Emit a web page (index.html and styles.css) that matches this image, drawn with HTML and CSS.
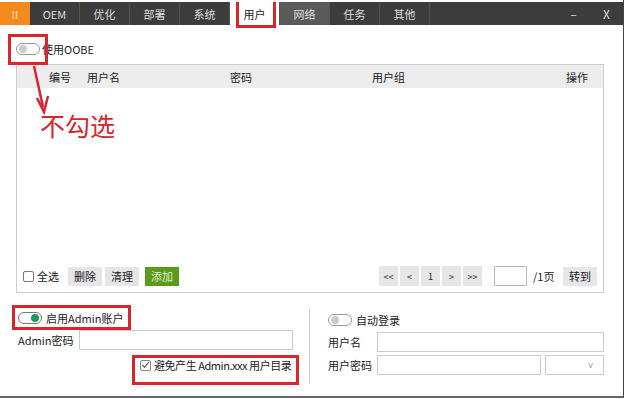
FILE: index.html
```html
<!DOCTYPE html>
<html lang="zh-CN">
<head>
  <meta charset="UTF-8" />
  <title>用户</title>
  <link rel="stylesheet" href="styles.css">
</head>
<body>
  <div class="window">
    <div class="titlebar">
      <div class="tab tab-logo">II</div>
      <div class="tab">OEM</div>
      <div class="tab">优化</div>
      <div class="tab">部署</div>
      <div class="tab">系统</div>
      <div class="tab active">用户</div>
      <div class="tab hover">网络</div>
      <div class="tab">任务</div>
      <div class="tab">其他</div>
      <div class="spacer"></div>
      <div class="ctrl">–</div>
      <div class="ctrl">X</div>
    </div>

    <div class="content">
      <div class="row-oobe">
        <span class="toggle"><span class="knob"></span></span>
        <span>使用OOBE</span>
      </div>

      <div class="table">
        <div class="thead">
          <span class="c-id">编号</span>
          <span class="c-name">用户名</span>
          <span class="c-pass">密码</span>
          <span class="c-group">用户组</span>
          <span class="c-op">操作</span>
        </div>
        <div class="tbody"></div>
        <div class="tfoot">
          <label class="check"><span class="box"></span>全选</label>
          <button class="btn">删除</button>
          <button class="btn">清理</button>
          <button class="btn btn-green">添加</button>
          <div class="spacer"></div>
          <div class="pager">
            <button class="btn pg">&lt;&lt;</button>
            <button class="btn pg">&lt;</button>
            <button class="btn pg">1</button>
            <button class="btn pg">&gt;</button>
            <button class="btn pg">&gt;&gt;</button>
          </div>
          <span class="page-input"></span>
          <span class="page-total">/1页</span>
          <button class="btn">转到</button>
        </div>
      </div>

      <div class="lower">
        <div class="col-left">
          <div class="row-toggle">
            <span class="toggle on"><span class="knob"></span></span>
            <span>启用Admin账户</span>
          </div>
          <div class="field">
            <span class="label">Admin密码</span>
            <span class="input"></span>
          </div>
          <div class="row-avoid">
            <span class="box checked">
              <svg width="10" height="10" viewBox="0 0 10 10"><path d="M1.5 5 L4 7.5 L8.5 2" fill="none" stroke="#555" stroke-width="1.2"/></svg>
            </span>
            <span>避免产生 Admin.xxx 用户目录</span>
          </div>
        </div>
        <div class="col-right">
          <div class="row-toggle">
            <span class="toggle"><span class="knob"></span></span>
            <span>自动登录</span>
          </div>
          <div class="field">
            <span class="label">用户名</span>
            <span class="input"></span>
          </div>
          <div class="field">
            <span class="label">用户密码</span>
            <span class="input"></span>
            <span class="select">v</span>
          </div>
        </div>
      </div>
    </div>

    <!-- 标注 -->
    <div class="mark mark-tab"></div>
    <div class="mark mark-oobe"></div>
    <div class="mark mark-admin"></div>
    <div class="mark mark-avoid"></div>
    <svg class="arrow" width="30" height="50" viewBox="0 0 30 50">
      <path d="M3 1 L12 42" stroke="#d9252e" stroke-width="2.5" fill="none"/>
      <path d="M6 33 L13 47 L17 31" stroke="#d9252e" stroke-width="2.5" fill="none"/>
    </svg>
    <div class="note">不勾选</div>
  </div>
</body>
</html>
```

FILE: styles.css
```css
* {
  margin: 0;
  padding: 0;
  box-sizing: border-box;
}

html, body {
  width: 627px;
  height: 399px;
  background: #fff;
  font-family: "Noto Sans CJK SC", "Noto Sans", sans-serif;
  font-size: 11px;
  color: #222;
  overflow: hidden;
}

.window {
  position: relative;
  width: 624px;
  height: 398px;
  padding-top: 2px;
  border-right: 1px solid #444;
  border-bottom: 2px solid #666;
}

/* 标题栏 */
.titlebar {
  height: 23px;
  background: #3c3c3c;
  display: flex;
}

.tab {
  width: 50px;
  display: flex;
  align-items: center;
  justify-content: center;
  color: #ddd;
  border-right: 1px solid #555;
}

.tab-logo {
  width: 30px;
  background: #f28a1e;
  color: #fde2c0;
  border-right: none;
}

.tab.active {
  background: #fff;
  color: #222;
}

.tab.hover {
  background: #5a5a5a;
}

.spacer {
  flex: 1;
}

.ctrl {
  width: 33px;
  display: flex;
  align-items: center;
  justify-content: center;
  color: #ddd;
  font-size: 12px;
}

/* 内容 */
.content {
  padding: 0 19px 0 16px;
}

.row-oobe {
  height: 39px;
  display: flex;
  align-items: center;
  gap: 2px;
  padding-top: 8px;
}

.toggle {
  width: 24px;
  height: 12px;
  border: 1px solid #999;
  border-radius: 6px;
  display: inline-flex;
  align-items: center;
  padding-left: 2px;
  background: #fff;
}

.toggle .knob {
  width: 8px;
  height: 8px;
  border-radius: 50%;
  background: #ccc;
}

.toggle.on {
  border-color: #777;
  justify-content: flex-end;
  padding-right: 2px;
}

.toggle.on .knob {
  background: #1f9a5a;
}

.table {
  height: 229px;
  border: 1px solid #ccc;
  display: flex;
  flex-direction: column;
}

.thead {
  height: 23px;
  background: #ececec;
  display: flex;
  align-items: center;
  position: relative;
}

.thead span {
  position: absolute;
}

.c-id { left: 32px; }
.c-name { left: 70px; }
.c-pass { left: 213px; }
.c-group { left: 355px; }
.c-op { left: 549px; }

.tbody {
  flex: 1;
}

.tfoot {
  height: 27px;
  display: flex;
  align-items: center;
  padding: 0 6px 5px 6px;
  gap: 3px;
}

.check {
  display: flex;
  align-items: center;
  gap: 3px;
  margin-right: 6px;
}

.box {
  width: 11px;
  height: 11px;
  border: 1px solid #777;
  border-radius: 2px;
  display: inline-flex;
  align-items: center;
  justify-content: center;
  background: #fff;
}

.btn {
  height: 19px;
  padding: 0 6px;
  border: none;
  background: #e6e6e6;
  font-family: inherit;
  font-size: 11px;
  color: #222;
}

.btn-green {
  margin-left: 3px;
  background: #5b9a1c;
  color: #dff0c8;
}

.pager {
  display: flex;
  gap: 2px;
}

.btn.pg {
  padding: 0;
  width: 19px;
  height: 20px;
  font-size: 9px;
}

.page-input {
  width: 33px;
  height: 20px;
  border: 1px solid #bbb;
  margin-left: 9px;
}

.page-total {
  width: 30px;
  padding-left: 3px;
}

/* 下半部分 */
.lower {
  display: flex;
  padding-top: 15px;
}

.col-left {
  width: 294px;
  padding-right: 16px;
  border-right: 1px solid #ccc;
  padding-bottom: 6px;
}

.col-right {
  flex: 1;
  padding-left: 16px;
  padding-top: 2px;
}

.row-toggle {
  height: 20px;
  display: flex;
  align-items: center;
  gap: 4px;
  padding-left: 2px;
}

.field {
  display: flex;
  align-items: center;
  height: 23px;
}

.field .label {
  width: 63px;
  padding-left: 2px;
}

.col-right .field .label {
  width: 51px;
}

.input {
  flex: 1;
  height: 20px;
  border: 1px solid #ccc;
}

.select {
  width: 59px;
  height: 20px;
  border: 1px solid #ccc;
  margin-left: 4px;
  color: #999;
  font-size: 9px;
  display: flex;
  align-items: center;
  justify-content: flex-end;
  padding-right: 10px;
}

.row-avoid {
  height: 24px;
  margin-top: 2px;
  display: flex;
  align-items: center;
  gap: 3px;
  padding-left: 124px;
  white-space: nowrap;
  letter-spacing: -0.45px;
}

.box.checked {
  border-color: #888;
}

/* 红色标注 */
.mark {
  position: absolute;
  border: 3px solid #d9252e;
}

.mark-tab {
  left: 236px;
  top: 2px;
  width: 40px;
  height: 26px;
  border-top: none;
}

.mark-oobe {
  left: 8px;
  top: 34px;
  width: 40px;
  height: 31px;
}

.mark-admin {
  left: 12px;
  top: 305px;
  width: 119px;
  height: 25px;
}

.mark-avoid {
  left: 132px;
  top: 355px;
  width: 167px;
  height: 30px;
}

.arrow {
  position: absolute;
  left: 31px;
  top: 65px;
}

.note {
  position: absolute;
  left: 40px;
  top: 107px;
  font-size: 25px;
  color: #d9252e;
  letter-spacing: 0;
}
```
